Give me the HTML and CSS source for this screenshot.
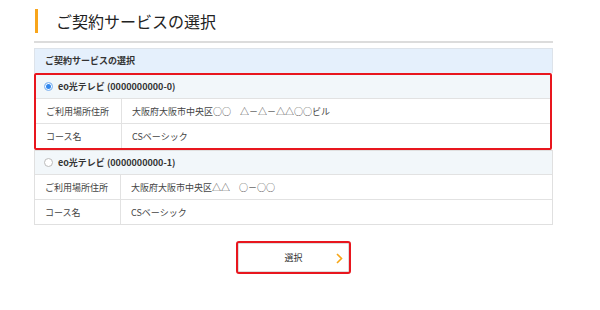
FILE: index.html
```html
<!DOCTYPE html>
<html lang="ja">
<head>
  <meta charset="UTF-8" />
  <meta name="viewport" content="width=device-width, initial-scale=1.0"/>
  <title>ご契約サービスの選択</title>
  <link rel="stylesheet" href="styles.css">
</head>
<body>

  <div class="page">
    <h1 class="page-title">ご契約サービスの選択</h1>

    <div class="service-table">
      <div class="table-head">ご契約サービスの選択</div>

      <div class="service selected">
        <label class="service-name">
          <span class="radio checked"></span>
          eo光テレビ (0000000000-0)
        </label>
        <div class="row">
          <div class="cell-label">ご利用場所住所</div>
          <div class="cell-value">大阪府大阪市中央区○○　△－△－△△○○ビル</div>
        </div>
        <div class="row">
          <div class="cell-label">コース名</div>
          <div class="cell-value">CSベーシック</div>
        </div>
      </div>

      <div class="service">
        <label class="service-name">
          <span class="radio"></span>
          eo光テレビ (0000000000-1)
        </label>
        <div class="row">
          <div class="cell-label">ご利用場所住所</div>
          <div class="cell-value">大阪府大阪市中央区△△　○－○○</div>
        </div>
        <div class="row">
          <div class="cell-label">コース名</div>
          <div class="cell-value">CSベーシック</div>
        </div>
      </div>
    </div>

    <div class="actions">
      <button type="button" class="select-button">
        選択
        <svg class="chevron" width="7" height="11" viewBox="0 0 7 11">
          <path d="M1 1 L5.5 5.5 L1 10" fill="none" stroke="#f7a616" stroke-width="1.6"/>
        </svg>
      </button>
    </div>
  </div>

</body>
</html>
```

FILE: styles.css
```css
body {
  margin: 0;
  background: #fff;
  font-family: "Noto Sans CJK JP", "Noto Sans", sans-serif;
  color: #333;
}

.page {
  width: 519px;
  margin-left: 34px;
  padding-top: 9px;
}

.page-title {
  margin: 0 0 0 1px;
  height: 24px;
  line-height: 24px;
  padding-left: 18px;
  border-left: 3px solid #f8a51b;
  font-size: 16px;
  font-weight: normal;
  color: #222;
}

.service-table {
  margin-top: 8px;
  border-top: 2px solid #dcdcdc;
  padding-top: 5px;
}

.table-head {
  height: 24px;
  line-height: 24px;
  padding-left: 10px;
  background: #e5f0fc;
  border: 1px solid #dde3ea;
  border-bottom: none;
  font-size: 9px;
  font-weight: bold;
  color: #333;
}

.service {
  border: 1px solid #e0e0e0;
  border-bottom: none;
}

.service:last-child {
  border-bottom: 1px solid #e0e0e0;
}

.service.selected {
  border: 2px solid #e8161e;
  border-radius: 2px;
  margin-right: 1px;
}

.service-name {
  display: flex;
  align-items: center;
  gap: 3px;
  height: 23px;
  padding-left: 9px;
  background: #f2f7fa;
  border-bottom: 1px solid #e2e2e2;
  font-size: 9px;
  font-weight: bold;
  color: #333;
}

.service.selected .service-name {
  padding-left: 8px;
}

.radio {
  width: 7px;
  height: 7px;
  border-radius: 50%;
  border: 1px solid #bbb;
  background: #fff;
  margin-right: 2px;
}

.radio.checked {
  border-color: #9cc3f2;
  background: #2f86ee;
  box-shadow: inset 0 0 0 1px #fff;
}

.row {
  display: grid;
  grid-template-columns: 86px 1fr;
  height: 24px;
  font-size: 9px;
  color: #444;
}

.row + .row {
  border-top: 1px solid #e2e2e2;
}

.cell-label {
  display: flex;
  align-items: center;
  padding-left: 10px;
  border-right: 1px solid #e2e2e2;
}

.cell-value {
  display: flex;
  align-items: center;
  padding-left: 10px;
}

.actions {
  display: flex;
  justify-content: center;
  margin-top: 16px;
}

.select-button {
  position: relative;
  width: 115px;
  height: 33px;
  border: 2px solid #e8161e;
  border-radius: 3px;
  background: #fff;
  box-shadow: inset 0 0 0 1px #ddd;
  font-family: inherit;
  font-size: 9px;
  color: #333;
  cursor: pointer;
}

.chevron {
  position: absolute;
  right: 6px;
  top: 10px;
}
```
